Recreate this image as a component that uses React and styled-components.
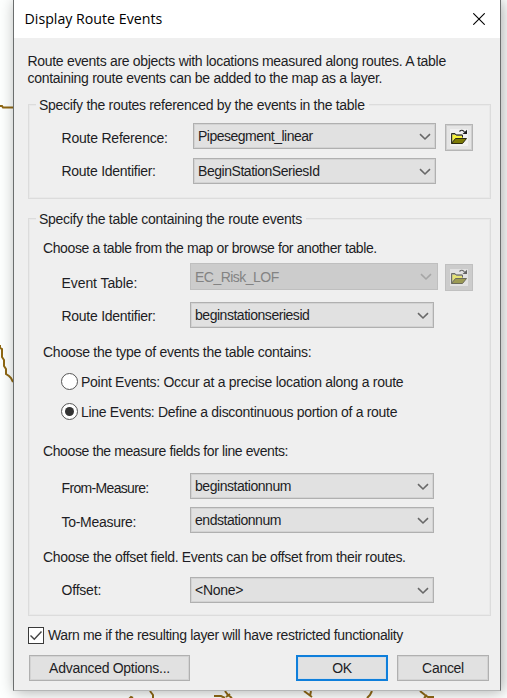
import React from 'react';
import styled, { createGlobalStyle, css } from 'styled-components';

const Global = createGlobalStyle`
  * { box-sizing: border-box; }
  body { margin: 0; overflow: hidden; background: #fff; }
`;

const Desktop = styled.div`
  position: relative;
  width: 507px;
  height: 698px;
  overflow: hidden;
  background: #fdfffe;
  font: 14px/16px "Liberation Sans", Arial, sans-serif;
  color: #1d1d24;
`;

const MapLines = styled.svg`
  position: absolute;
  inset: 0;
  fill: none;
  stroke: #8f6814;
  stroke-width: 2;
`;

const Dialog = styled.main`
  position: relative;
  width: 488px;
  height: 691px;
  margin-left: 13px;
  border: solid #6b6e6e;
  border-width: 0 1px 1px;
  border-bottom-color: #b4b6b6;
  background: #efefef;
  box-shadow: 2px 1px 14px rgba(0, 0, 0, 0.32);
`;

const TitleBar = styled.header`
  display: flex;
  justify-content: space-between;
  height: 38px;
  padding: 9px 15px 0 10.5px;
  background: #fff;
  color: #000;
  font: 14.2px/20px "Open Sans", sans-serif;
`;

const CloseButton = styled.button`
  width: 12px;
  height: 12px;
  margin-top: 4px;
  padding: 0;
  border: 0;
  background: none;
  svg { display: block; }
`;

const Body = styled.div`
  padding: 15px 9px 0 14px;
`;

const Text = styled.span`
  display: block;
  white-space: nowrap;
  letter-spacing: ${(p) => p.$track || 0}px;
`;

const Intro = styled.div`
  line-height: 16.5px;
  margin-left: -0.5px;
`;

const Group = styled.section`
  height: ${(p) => p.$height}px;
  margin-top: ${(p) => p.$top}px;
  border: 1px solid #dcdcdc;
  box-shadow: inset 0 0 0 1px #e9e9e9;
`;

const Legend = styled.h2`
  width: fit-content;
  margin: -8px 0 0 7px;
  padding: 0 4px 0 3px;
  background: #efefef;
  font: inherit;
`;

const Hint = styled.div`
  margin: ${(p) => p.$top}px 0 0 14px;
`;

const Field = styled.div`
  display: grid;
  grid-template-columns: ${(p) => p.$label}px auto auto;
  justify-content: start;
  align-items: start;
  height: 26px;
  margin: ${(p) => p.$top}px 0 0 32px;
`;

const Label = styled.label`
  padding: ${(p) => p.$drop}px 0 0 0.5px;
`;

const Select = styled.div`
  display: flex;
  justify-content: space-between;
  align-items: center;
  width: ${(p) => p.$width}px;
  height: 26px;
  padding: 0 4px;
  border: 1px solid #b0b0b0;
  background: #e1e1e1;
  box-shadow: inset 0 0 0 1px #d3d3d3;
  svg { margin-top: 1px; }
  ${(p) => p.$disabled && css`
    height: 27px;
    border-color: #bfbfbf;
    background: #cccccc;
    box-shadow: none;
    color: #838383;
    svg { margin-right: 1px; }
  `}
`;

const BrowseButton = styled.button`
  display: grid;
  place-items: center;
  width: 28px;
  height: 27px;
  margin: 1px 0 0 ${(p) => p.$gap}px;
  padding: 0;
  border: 1px solid #b5b5b5;
  background: #e5e5e5;
  box-shadow: inset 0 0 0 1px #cfcfcf;
  ${(p) => p.disabled && css`
    background: #cccccc;
    border-color: #c0c0c0;
    box-shadow: none;
    svg { opacity: 0.6; }
  `}
`;

const Option = styled.div`
  display: flex;
  gap: 3px;
  align-items: center;
  height: 18px;
  margin: ${(p) => p.$top}px 0 0 32px;
`;

const Radio = styled.span`
  display: grid;
  place-items: center;
  width: 17px;
  height: 17px;
  margin-bottom: 1px;
  border: 1.4px solid #555;
  border-radius: 50%;
  background: #fff;
  &::after {
    content: "";
    width: 9px;
    height: 9px;
    border-radius: 50%;
    background: ${(p) => (p.$on ? '#333' : 'transparent')};
  }
`;

const WarnRow = styled.div`
  display: flex;
  gap: 4px;
  margin-top: 11px;
`;

const CheckBox = styled.span`
  width: 16px;
  height: 17px;
  border: 1px solid #3a3a3a;
  background: #fff;
  svg { display: block; }
`;

const Footer = styled.footer`
  display: flex;
  margin: 11px 0 0 1px;
`;

const Button = styled.button`
  display: flex;
  justify-content: center;
  align-items: center;
  width: ${(p) => p.$width}px;
  height: 26px;
  margin-left: ${(p) => p.$gap || 0}px;
  padding: 0;
  border: ${(p) => (p.$primary ? '2px solid #0f7fdb' : '1px solid #b0b0b0')};
  background: #e1e1e1;
  box-shadow: inset 0 0 0 1px ${(p) => (p.$primary ? '#d3dde6' : '#d3d3d3')};
  color: inherit;
  font: inherit;
`;

const Chevron = ({ faded }) => (
  <svg width="12" height="8" viewBox="0 0 12 8" fill="none">
    <path d="M1 1.200 L6 6 L11 1.200" stroke={faded ? '#a6a6a6' : '#686868'} strokeWidth="1.600" />
  </svg>
);

const Folder = () => (
  <svg width="18" height="17" viewBox="0 0 18 17">
    <path fill="#f1f1f1" d="M0 0h18v17H0z" />
    <path fill="#9a9a70" d="M1.500 4.500h3.500l1 1h6v4H5l-3.500 5z" />
    <path fill="#f7f33a" d="M2.500 6H6l1 1h5.500v2H5.500l-3 3z" />
    <path d="M1.500 14.500V4.500H5l1 1.500h6.500v2.500" fill="none" stroke="#2e2e26" />
    <path d="M1.500 14.500 5.500 9.500h11l-4 5z" fill="#7d7b06" stroke="#2c2b10" />
    <path d="M9.500 2.500Q12-.2 14.500 3" fill="none" stroke="#2a2a2a" strokeWidth="1.200" />
    <path d="M17 .8V5h-4.500z" fill="#1c1c1c" />
  </svg>
);

const Combo = ({ width, track, disabled, children }) => (
  <Select $width={width} $disabled={disabled}>
    <Text $track={track}>{children}</Text>
    <Chevron faded={disabled} />
  </Select>
);

export default function App() {
  return (
    <Desktop>
      <Global />
      <MapLines width="507" height="698">
        <path d="M0 106h2l1 1.500h10" />
        <path d="M0 345v3l2 1v8l2 3v6l2 3v5l3 2 2 2 2 4" />
        <path d="M129 699l2-2 2 1M150 691l3 4v4M214 696h7l4 2M225 691l3 4 4 3M226 697l4-3" />
        <path d="M304 691l8 6M311 691l-1 5M372 691l-2 4-3 3M420 691l5 4 3 2h6M424 698l3-3" />
      </MapLines>
      <Dialog>
        <TitleBar>
          <Text>Display Route Events</Text>
          <CloseButton aria-label="Close">
            <svg width="12" height="12" viewBox="0 0 12 12">
              <path d="M.3.3l11.400 11.400M11.700.3L.3 11.700" stroke="#000" strokeWidth="1.1" />
            </svg>
          </CloseButton>
        </TitleBar>
        <Body>
          <Intro>
            <Text $track={-0.305}>Route events are objects with locations measured along routes. A table</Text>
            <Text $track={-0.28}>containing route events can be added to the map as a layer.</Text>
          </Intro>
          <Group $top={18} $height={95}>
            <Legend><Text $track={-0.3}>Specify the routes referenced by the events in the table</Text></Legend>
            <Field $label={132} $top={10}>
              <Label $drop={7}><Text $track={-0.22}>Route Reference:</Text></Label>
              <Combo width={243} track={-0.5}>Pipesegment_linear</Combo>
              <BrowseButton $gap={9} aria-label="Browse"><Folder /></BrowseButton>
            </Field>
            <Field $label={132} $top={9}>
              <Label $drop={5}><Text $track={-0.27}>Route Identifier:</Text></Label>
              <Combo width={243} track={-0.46}>BeginStationSeriesId</Combo>
            </Field>
          </Group>
          <Group $top={19} $height={398}>
            <Legend><Text $track={-0.28}>Specify the table containing the route events</Text></Legend>
            <Hint $top={13}><Text $track={-0.39}>Choose a table from the map or browse for another table.</Text></Hint>
            <Field $label={129} $top={7}>
              <Label $drop={12}><Text $track={-0.08}>Event Table:</Text></Label>
              <Combo width={248} track={-0.52} disabled>EC_Risk_LOF</Combo>
              <BrowseButton $gap={7} disabled aria-label="Browse"><Folder /></BrowseButton>
            </Field>
            <Field $label={129} $top={13}>
              <Label $drop={6}><Text $track={-0.27}>Route Identifier:</Text></Label>
              <Combo width={244} track={-0.47}>beginstationseriesid</Combo>
            </Field>
            <Hint $top={16}><Text $track={-0.26}>Choose the type of events the table contains:</Text></Hint>
            <Option $top={13}><Radio /><Text $track={-0.28}>Point Events: Occur at a precise location along a route</Text></Option>
            <Option $top={12}><Radio $on /><Text $track={-0.3}>Line Events: Define a discontinuous portion of a route</Text></Option>
            <Hint $top={22}><Text $track={-0.39}>Choose the measure fields for line events:</Text></Hint>
            <Field $label={129} $top={14}>
              <Label $drop={7}><Text $track={-0.66}>From-Measure:</Text></Label>
              <Combo width={244} track={-0.45}>beginstationnum</Combo>
            </Field>
            <Field $label={129} $top={8}>
              <Label $drop={7}><Text $track={-0.28}>To-Measure:</Text></Label>
              <Combo width={244} track={-0.45}>endstationnum</Combo>
            </Field>
            <Hint $top={16}><Text $track={-0.32}>Choose the offset field. Events can be offset from their routes.</Text></Hint>
            <Field $label={129} $top={12}>
              <Label $drop={5}><Text $track={-0.2}>Offset:</Text></Label>
              <Combo width={244} track={-0.3}>{'<None>'}</Combo>
            </Field>
          </Group>
          <WarnRow>
            <CheckBox>
              <svg width="14" height="15" viewBox="0 0 14 15">
                <path d="M1.500 7.500 5.300 11.300 12.500 3.500" fill="none" stroke="#444" strokeWidth="1.4" />
              </svg>
            </CheckBox>
            <Text $track={-0.36}>Warn me if the resulting layer will have restricted functionality</Text>
          </WarnRow>
          <Footer>
            <Button $width={161}><Text $track={-0.28}>Advanced Options...</Text></Button>
            <Button $width={92} $gap={106} $primary><Text $track={-0.3}>OK</Text></Button>
            <Button $width={92} $gap={9}><Text $track={-0.3}>Cancel</Text></Button>
          </Footer>
        </Body>
      </Dialog>
    </Desktop>
  );
}
